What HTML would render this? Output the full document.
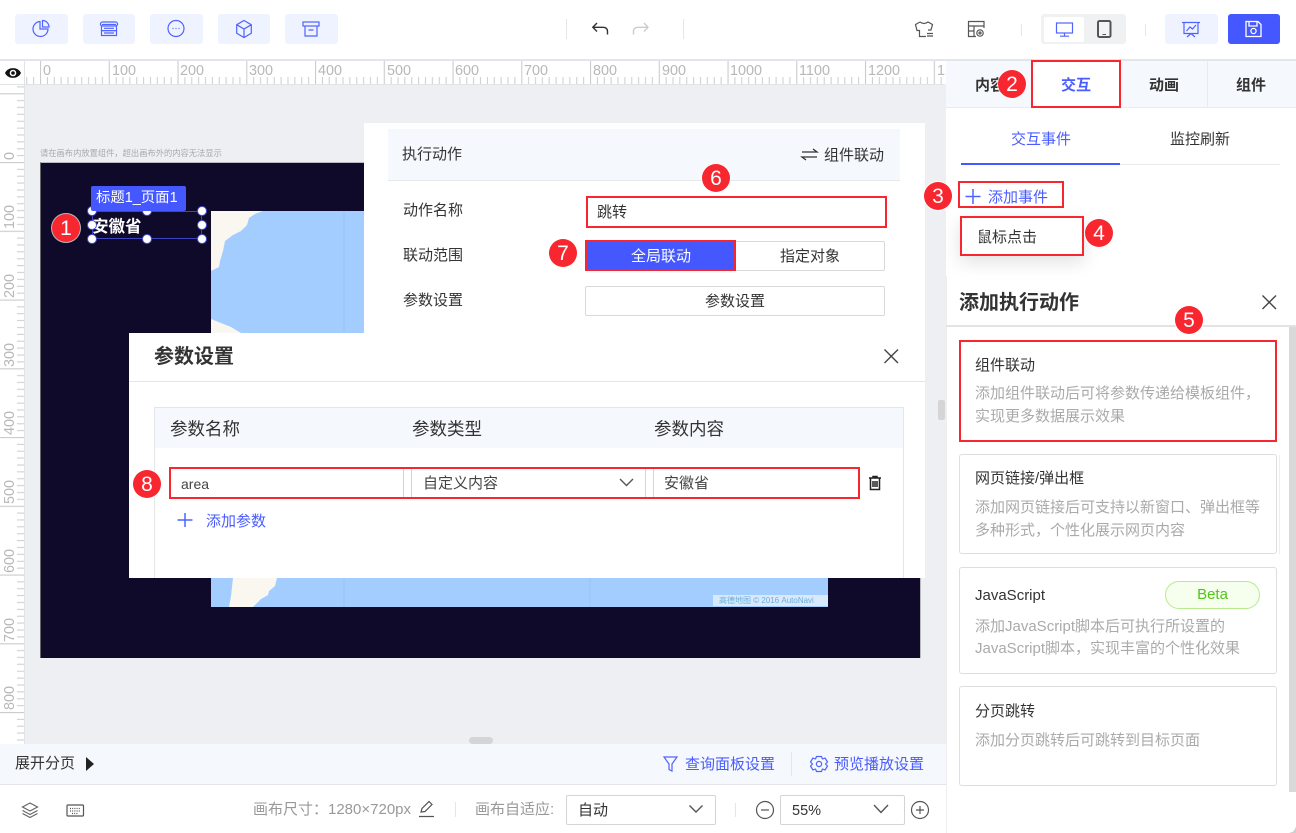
<!DOCTYPE html>
<html lang="zh">
<head>
<meta charset="utf-8">
<title>交互设置</title>
<style>
html,body{margin:0;padding:0;width:1296px;height:833px;overflow:hidden;background:#fff}
body{position:relative;font-family:"Liberation Sans","Noto Sans CJK SC",sans-serif;font-size:15px;color:#333}
.b{position:absolute;box-sizing:border-box}
.t{position:absolute;white-space:nowrap;line-height:20px;height:20px;margin-top:1px}
.blue{color:#4a5cff}
.gr{color:#aaa}
.bd{font-weight:700}
.r{position:absolute;box-sizing:border-box;border:2px solid #f8262f}
.n{position:absolute;width:28px;height:28px;border-radius:50%;background:#f8262f;color:#fff;text-align:center;line-height:29px;font-size:21px;box-shadow:0 0 0 1px rgba(255,255,255,.7)}
.card{position:absolute;box-sizing:border-box;left:959px;width:318px;border:1px solid #dcdee2;border-radius:3px;background:#fff}
.h{position:absolute;box-sizing:border-box;width:10px;height:10px;border-radius:50%;background:#fff;border:1.5px solid #4a50d8}
svg text{font-family:"Liberation Sans","Noto Sans CJK SC",sans-serif}
</style>
</head>
<body>
<!-- toolbar backgrounds -->
<div class="b" style="left:15px;top:14px;width:53px;height:30px;background:#eff3ff;border-radius:3px"></div>
<div class="b" style="left:83px;top:14px;width:52px;height:30px;background:#eff3ff;border-radius:3px"></div>
<div class="b" style="left:150px;top:14px;width:53px;height:30px;background:#eff3ff;border-radius:3px"></div>
<div class="b" style="left:218px;top:14px;width:52px;height:30px;background:#eff3ff;border-radius:3px"></div>
<div class="b" style="left:285px;top:14px;width:53px;height:30px;background:#eff3ff;border-radius:3px"></div>
<div class="b" style="left:1041px;top:14px;width:85px;height:30px;background:#f0f1f3;border-radius:3px"></div>
<div class="b" style="left:1044px;top:17px;width:40px;height:25px;background:#fff;border-radius:2px"></div>
<div class="b" style="left:1165px;top:14px;width:53px;height:30px;background:#eff3ff;border-radius:3px"></div>
<div class="b" style="left:1228px;top:14px;width:52px;height:30px;background:#4558ff;border-radius:3px"></div>
<div class="b" style="left:0;top:59px;width:1296px;height:2px;background:#e4e5ea"></div>

<!-- canvas -->
<div class="b" style="left:24px;top:84px;width:922px;height:660px;background:#eeeff3"></div>
<div class="t" style="left:40px;top:143px;font-size:8.27px;color:#aaa">请在画布内放置组件，超出画布外的内容无法显示</div>
<div class="b" style="left:40px;top:162px;width:881px;height:496px;background:#0f0a2a;border-top:1px solid #b9b9c2;border-left:1px solid #666;border-right:1px solid #bbb"></div>
<div class="b" style="left:211px;top:211px;width:617px;height:396px;background:#a3cdff;overflow:hidden">
<svg width="617" height="396" style="position:absolute;left:0;top:0">
<path d="M0 0H52L44 3 38 7 36 14 30 20 22 24 14 30 12 40 9 50 8 56 0 60Z" fill="#faf7f0"/>
<path d="M0 108L10 112 20 116 30 122H0Z" fill="#faf7f0"/>
<path d="M18 396L20 385 22 367H66L64 375 58 380 57 384 50 388 42 396Z" fill="#faf7f0"/>
<path d="M133 0V396M379 0V396" stroke="#98c4f7" stroke-width="1"/>
</svg>
<div class="t" style="left:502px;top:383px;width:115px;height:11px;line-height:11px;background:#d8e9fb;color:#6cb0dd;font-size:8px;padding-left:6px;box-sizing:border-box">高德地图 © 2016 AutoNavi</div>
</div>

<!-- selected title -->
<div class="b" style="left:92px;top:211px;width:110px;height:28px;border:1.5px solid #3f44c0"></div>
<div class="t bd" style="left:92px;top:216px;font-size:16.5px;color:#fff">安徽省</div>
<div class="h" style="left:87px;top:206px"></div><div class="h" style="left:142px;top:206px"></div><div class="h" style="left:197px;top:206px"></div>
<div class="h" style="left:87px;top:220px"></div><div class="h" style="left:197px;top:220px"></div>
<div class="h" style="left:87px;top:234px"></div><div class="h" style="left:142px;top:234px"></div><div class="h" style="left:197px;top:234px"></div>
<div class="b" style="left:91px;top:186px;width:95px;height:25px;background:#4558ff;border-radius:2px"></div>
<div class="t" style="left:96px;top:187px;color:#fff;font-size:14.4px">标题1_页面1</div>

<!-- action panel -->
<div class="b" style="left:364px;top:123px;width:561px;height:215px;background:#fff"></div>
<div class="b" style="left:388px;top:129px;width:512px;height:52px;background:#f5f8fc;border-bottom:1px solid #e6e8ec"></div>
<div class="t" style="left:402px;top:144px">执行动作</div>
<div class="t" style="left:824px;top:145px">组件联动</div>
<div class="t" style="left:403px;top:200px">动作名称</div>
<div class="t" style="left:403px;top:245px">联动范围</div>
<div class="t" style="left:403px;top:290px">参数设置</div>
<div class="b" style="left:586px;top:196px;width:301px;height:32px;border-bottom:1px solid #ddd"></div>
<div class="t" style="left:597px;top:202px">跳转</div>
<div class="b" style="left:585px;top:241px;width:300px;height:30px;border:1px solid #d9d9d9;border-radius:2px"></div>
<div class="b" style="left:585px;top:241px;width:151px;height:30px;background:#4558ff"></div>
<div class="t" style="left:631px;top:246px;color:#fff">全局联动</div>
<div class="t" style="left:780px;top:246px">指定对象</div>
<div class="b" style="left:585px;top:286px;width:300px;height:30px;border:1px solid #d9d9d9;border-radius:2px"></div>
<div class="t" style="left:705px;top:291px">参数设置</div>

<!-- params dialog -->
<div class="b" style="left:129px;top:333px;width:796px;height:245px;background:#fff"></div>
<div class="b" style="left:129px;top:381px;width:796px;height:1px;background:#e3e5e9"></div>
<div class="t bd" style="left:154px;top:346px;font-size:20px">参数设置</div>
<div class="b" style="left:154px;top:407px;width:750px;height:171px;border:1px solid #e4e6ea;border-bottom:0"></div>
<div class="b" style="left:155px;top:408px;width:748px;height:40px;background:#f5f8fc"></div>
<div class="t" style="left:170px;top:418px;font-size:17.5px">参数名称</div>
<div class="t" style="left:412px;top:418px;font-size:17.5px">参数类型</div>
<div class="t" style="left:654px;top:418px;font-size:17.5px">参数内容</div>
<div class="t" style="left:181px;top:473px;font-size:14px;color:#444">area</div>
<div class="t" style="left:423px;top:473px;color:#444">自定义内容</div>
<div class="t" style="left:664px;top:473px;color:#444">安徽省</div>
<div class="t blue" style="left:206px;top:511px">添加参数</div>

<!-- right panel -->
<div class="b" style="left:946px;top:61px;width:350px;height:772px;background:#fff"></div>
<div class="b" style="left:946px;top:61px;width:350px;height:47px;background:#f5f8fc;border-bottom:1px solid #e8ebf0"></div>
<div class="b" style="left:1031px;top:60px;width:90px;height:48px;background:#fff"></div>
<div class="b" style="left:1207px;top:61px;width:1px;height:47px;background:#e8ebf0"></div>
<div class="t bd" style="left:975px;top:75px">内容</div>
<div class="t bd blue" style="left:1061px;top:75px">交互</div>
<div class="t bd" style="left:1149px;top:75px">动画</div>
<div class="t bd" style="left:1236px;top:75px">组件</div>
<div class="t blue" style="left:1011px;top:129px">交互事件</div>
<div class="t" style="left:1170px;top:129px">监控刷新</div>
<div class="b" style="left:961px;top:164px;width:319px;height:1px;background:#e8eaee"></div>
<div class="b" style="left:961px;top:163px;width:159px;height:2px;background:#4558ff"></div>
<div class="t blue" style="left:988px;top:187px">添加事件</div>
<div class="b" style="left:960px;top:216px;width:124px;height:40px;background:#fff;box-shadow:0 6px 18px rgba(0,0,0,.12)"></div>
<div class="t" style="left:977px;top:227px">鼠标点击</div>

<div class="b" style="left:946px;top:276px;width:350px;height:557px;background:#fff;border-left:1px solid #eee"></div>
<div class="t bd" style="left:959px;top:292px;font-size:20px">添加执行动作</div>
<div class="b" style="left:946px;top:325px;width:350px;height:2px;background:#e3e3e3"></div>
<div class="b" style="left:1289px;top:327px;width:7px;height:465px;background:#d9d9d9"></div>
<div class="b" style="left:1279px;top:455px;width:1px;height:99px;background:#eee"></div>

<div class="card" style="top:340px;height:102px"></div>
<div class="t" style="left:975px;top:355px">组件联动</div>
<div class="t gr" style="left:975px;top:383px">添加组件联动后可将参数传递给模板组件，</div>
<div class="t gr" style="left:975px;top:406px">实现更多数据展示效果</div>

<div class="card" style="top:454px;height:100px"></div>
<div class="t" style="left:975px;top:468px">网页链接/弹出框</div>
<div class="t gr" style="left:975px;top:497px">添加网页链接后可支持以新窗口、弹出框等</div>
<div class="t gr" style="left:975px;top:520px">多种形式，个性化展示网页内容</div>

<div class="card" style="top:567px;height:107px"></div>
<div class="t" style="left:975px;top:585px">JavaScript</div>
<div class="b" style="left:1165px;top:581px;width:95px;height:28px;background:#f6ffed;border:1px solid #b7eb8f;border-radius:14px;color:#52c41a;text-align:center;line-height:26px">Beta</div>
<div class="t gr" style="left:975px;top:616px">添加JavaScript脚本后可执行所设置的</div>
<div class="t gr" style="left:975px;top:638px">JavaScript脚本，实现丰富的个性化效果</div>

<div class="card" style="top:686px;height:100px"></div>
<div class="t" style="left:975px;top:701px">分页跳转</div>
<div class="t gr" style="left:975px;top:730px">添加分页跳转后可跳转到目标页面</div>

<!-- bottom bars -->
<div class="b" style="left:0;top:744px;width:946px;height:41px;background:#f5f8fc;border-bottom:1px solid #e3e5ea"></div>
<div class="b" style="left:469px;top:737px;width:24px;height:7px;background:#d5d5d5;border-radius:4px"></div>
<div class="b" style="left:938px;top:400px;width:7px;height:20px;background:#d5d5d5;border-radius:2px"></div>
<div class="t" style="left:15px;top:753px">展开分页</div>
<div class="t blue" style="left:685px;top:754px">查询面板设置</div>
<div class="t blue" style="left:834px;top:754px">预览播放设置</div>
<div class="t" style="left:253px;top:799px;color:#999">画布尺寸：1280×720px</div>
<div class="t" style="left:475px;top:799px;color:#999">画布自适应:</div>
<div class="b" style="left:566px;top:795px;width:150px;height:30px;border:1px solid #d4d4d4;border-radius:2px"></div>
<div class="t" style="left:578px;top:800px">自动</div>
<div class="b" style="left:780px;top:795px;width:125px;height:30px;border:1px solid #d4d4d4;border-radius:2px"></div>
<div class="t" style="left:792px;top:800px;font-size:14.5px">55%</div>

<!-- rulers and icons -->
<svg width="1296" height="833" viewBox="0 0 1296 833" style="position:absolute;left:0;top:0;pointer-events:none">
<defs>
<pattern id="hm" x="40" y="61" width="68.75" height="23" patternUnits="userSpaceOnUse">
<path d="M.5 0V23" stroke="#ccc" stroke-width="1.2"/>
<path d="M7.4 16V23M14.25 16V23M21.1 16V23M28 16V23M34.9 16V23M41.75 16V23M48.6 16V23M55.5 16V23M62.4 16V23" stroke="#ccc" stroke-width="1"/>
</pattern>
<pattern id="vm" x="0" y="93.25" width="24" height="68.75" patternUnits="userSpaceOnUse">
<path d="M0 .5H24" stroke="#ccc" stroke-width="1.2"/>
<path d="M17 7.4H24M17 14.25H24M17 21.1H24M17 28H24M17 34.9H24M17 41.75H24M17 48.6H24M17 55.5H24M17 62.4H24" stroke="#ccc" stroke-width="1"/>
</pattern>
</defs>
<rect x="24" y="61" width="920" height="23" fill="#fff"/>
<rect x="24" y="61" width="920" height="23" fill="url(#hm)"/>
<path d="M0 84.5H944" stroke="#e2e3e7"/>
<rect x="0" y="85" width="24" height="659" fill="#fff"/>
<rect x="0" y="85" width="24" height="659" fill="url(#vm)"/>
<path d="M24.5 61V744" stroke="#e2e3e7"/>
<g font-size="14.4" fill="#b8b8b8">
<text x="43" y="75">0</text><text x="112" y="75">100</text><text x="180" y="75">200</text><text x="249" y="75">300</text><text x="318" y="75">400</text><text x="387" y="75">500</text><text x="455" y="75">600</text><text x="524" y="75">700</text><text x="593" y="75">800</text><text x="662" y="75">900</text><text x="730" y="75">1000</text><text x="799" y="75">1100</text><text x="868" y="75">1200</text><text x="937" y="75">1</text>
<text transform="translate(14 160) rotate(-90)">0</text>
<text transform="translate(14 229) rotate(-90)">100</text>
<text transform="translate(14 298) rotate(-90)">200</text>
<text transform="translate(14 367) rotate(-90)">300</text>
<text transform="translate(14 435) rotate(-90)">400</text>
<text transform="translate(14 504) rotate(-90)">500</text>
<text transform="translate(14 573) rotate(-90)">600</text>
<text transform="translate(14 642) rotate(-90)">700</text>
<text transform="translate(14 710) rotate(-90)">800</text>
</g>
<!-- eye -->
<path d="M5 73C8 66.5 18 66.5 21 73C18 79.5 8 79.5 5 73Z" fill="#111"/><circle cx="13" cy="73" r="3.3" fill="#fff"/><circle cx="13" cy="73" r="1.8" fill="#111"/>

<g fill="none" stroke="#4f63ff" stroke-width="1.2">
<!-- pie -->
<path d="M40 21.5A7.5 7.5 0 1 0 48 29H40Z"/><path d="M42.5 20.5A6.5 6.5 0 0 1 49 27H42.5Z"/>
<!-- server -->
<path d="M102 26A1 1 0 0 1 103 22H115A1 1 0 0 1 116 26M102 24.5H116"/><rect x="101.5" y="26" width="15" height="4.6"/><rect x="101.5" y="30.6" width="15" height="4.9"/><path d="M104 28.3H114M104 33H114"/>
<!-- dots -->
<circle cx="176" cy="28.5" r="8"/><path d="M172.5 28.5h1M175.5 28.5h1M178.5 28.5h1"/>
<!-- cube -->
<path d="M244 20.5l7.3 4.2v8.6L244 37.5l-7.3-4.2v-8.6ZM236.7 24.7l7.3 4.3 7.3-4.3M244 29v8.5"/>
<!-- archive -->
<rect x="303" y="22" width="16" height="4"/><path d="M305 26V36H317V26M308.5 30H313.5"/>
<!-- monitor -->
<rect x="1056.5" y="23" width="16" height="10"/><path d="M1064.5 33V36M1060 36.2H1069"/>
<!-- board -->
<path d="M1182 22.5H1200M1184 22.5V33.5H1198V22.5M1186.5 31L1190 27L1192.5 29L1196 25M1191 33.5L1187 37M1191 33.5L1195 37"/>
<!-- plus add event -->
<path d="M973 189V204M965.5 196.5H980.5M185 513V527M177.5 520H192.5" stroke-width="1.5"/>
<!-- funnel -->
<path d="M664 757H677L672 764V771L669 769.5V764Z"/>
<!-- gear -->
<path d="M816.5 756.5H821.5L822.5 759L825 758L827.5 762L825.5 764L827.5 766L825 770L822.5 769L821.5 771.5H816.5L815.5 769L813 770L810.5 766L812.5 764L810.5 762L813 758L815.5 759Z" stroke-linejoin="round"/><circle cx="819" cy="764" r="2.6"/>
</g>
<!-- save -->
<g fill="none" stroke="#fff" stroke-width="1.3"><path d="M1246 21.5H1258L1261 24.5V36.5H1246ZM1249 21.5V26H1257V21.5"/><circle cx="1253.5" cy="31" r="2.6"/></g>
<!-- undo/redo -->
<g fill="none" stroke-width="1.4">
<path d="M597 23L592.8 27.3L597 31.5M593 27.3H603Q607.5 27.3 607.5 31.5V34.5" stroke="#333"/>
<path d="M644 23L648 27.3L644 31.5M648 27.3H638Q633.5 27.3 633.5 31.5V34.5" stroke="#ccc"/>
</g>
<g fill="none" stroke="#555" stroke-width="1.2">
<!-- shirt -->
<path d="M920 22L915.5 24.5L917 30.5H919.5V36.5H926M920 22Q924 25 928 22L932.5 24.5L931 30H928M927 33.5H933M927 36H933"/>
<!-- table gear -->
<path d="M976 36.5H968.5V21.5H984V28M968.5 26H984M974 26V36.5M968.5 31H974"/><circle cx="980" cy="33" r="3.2"/><circle cx="980" cy="33" r="1"/>
<!-- layers -->
<path d="M30 803L37.5 807L30 811L22.5 807ZM22.5 810.5L30 814.5L37.5 810.5M22.5 813.5L30 817.5L37.5 813.5" stroke="#666"/>
<!-- keyboard -->
<rect x="67" y="805" width="16.5" height="11" rx="1"/><path d="M70 808.5H81M70 811H81M72 813.5H78.5" stroke-dasharray="1 1.2"/>
<!-- pencil -->
<path d="M421 812L422 808.5L429 801.5L432 804.5L425 811.5ZM419 816.5H434"/>
<!-- circles -->
<circle cx="765" cy="810" r="8.5"/><path d="M761 810H769"/>
<circle cx="920" cy="810" r="8.5"/><path d="M916 810H924M920 806V814"/>
<!-- chevrons -->
<path d="M689.5 805.5L696 812L702.5 805.5M874 805L881 812.5L888 805M620 479L626.5 485.5L633 479" stroke-width="1.4"/>
</g>
<!-- tablet -->
<rect x="1098" y="21" width="12.5" height="16" rx="1.5" fill="#f4f4f4" stroke="#555" stroke-width="2"/><path d="M1102.5 34.5H1106" stroke="#555" stroke-width="1"/>
<!-- triangle -->
<path d="M86 757L94 764L86 771Z" fill="#222"/>
<!-- X icons -->
<path d="M884.5 349.5L898 363M898 349.5L884.5 363M1262.5 295.5L1276 309M1276 295.5L1262.5 309" stroke="#444" stroke-width="1.4" fill="none"/>
<!-- swap -->
<path d="M802 152H817L813 149M817 157H802L806 160" fill="none" stroke="#333" stroke-width="1.3"/>
<!-- row separators -->
<path d="M403.5 469V497M411.5 469V497M645.5 469V497M653.5 469V497" stroke="#d4d4d4"/>
<!-- trash -->
<path d="M869 478H881M873 478V476.5H877V478M870.5 478V489.5H879.5V478M873 481V487M875 481V487M877 481V487" fill="none" stroke="#222" stroke-width="1.5"/>
<!-- separators -->
<path d="M566.5 19V39M683.5 19V39M1021.5 24V36M1145.5 24V36M791.5 752V776M455.5 802V817M735.5 803V817" stroke="#e5e6ea"/>
<!-- panel bottom corner -->
<path d="M1296 826Q1295 832 1289 833H1296Z" fill="#cfcfcf"/>
</svg>

<!-- red highlight rectangles -->
<div class="r" style="left:1031px;top:60px;width:90px;height:48px"></div>
<div class="r" style="left:958px;top:181px;width:106px;height:27px"></div>
<div class="r" style="left:960px;top:216px;width:124px;height:40px"></div>
<div class="r" style="left:959px;top:340px;width:318px;height:102px"></div>
<div class="r" style="left:586px;top:196px;width:301px;height:32px"></div>
<div class="r" style="left:585px;top:240px;width:151px;height:31px"></div>
<div class="r" style="left:169px;top:467px;width:691px;height:32px"></div>

<!-- numbered badges -->
<div class="n" style="left:52px;top:214px">1</div>
<div class="n" style="left:998px;top:70px">2</div>
<div class="n" style="left:924px;top:182px">3</div>
<div class="n" style="left:1085px;top:219px">4</div>
<div class="n" style="left:1175px;top:306px">5</div>
<div class="n" style="left:702px;top:164px">6</div>
<div class="n" style="left:549px;top:239px">7</div>
<div class="n" style="left:133px;top:470px">8</div>
</body>
</html>
